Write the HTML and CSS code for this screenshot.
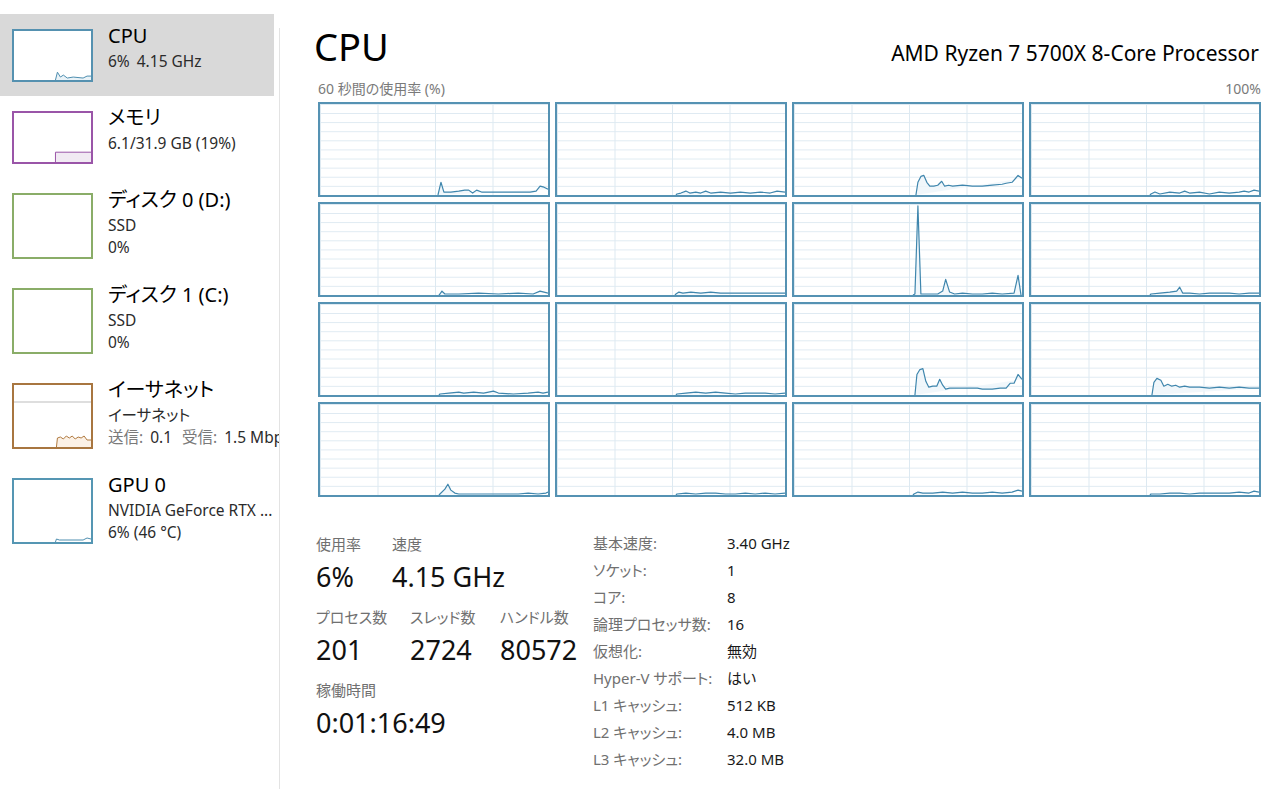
FILE: index.html
```html
<!DOCTYPE html>
<html lang="ja">
<head>
<meta charset="utf-8">
<title>タスク マネージャー - パフォーマンス</title>
<link rel="stylesheet" href="styles.css">
</head>
<body>
<div class="app">
  <nav class="sidebar">
    <div class="item selected">
      <div class="thumb thumb-cpu">
        <svg viewBox="0 0 78 50" preserveAspectRatio="none"><polygon class="fill-cpu" points="42,50 44,42 47,47 50,45 54,48 60,47 70,48 74,46 78,46 78,50"/><polyline class="line-cpu" points="42,50 44,42 47,47 50,45 54,48 60,47 70,48 74,46 78,46"/></svg>
      </div>
      <div class="info">
        <div class="name">CPU</div>
        <div class="sub">6%<span class="gap">4.15 GHz</span></div>
      </div>
    </div>
    <div class="item">
      <div class="thumb thumb-mem">
        <svg viewBox="0 0 78 50" preserveAspectRatio="none"><rect class="fill-mem" x="42" y="40" width="36" height="10"/><polyline class="line-mem" points="42,50 42,40 78,40"/></svg>
      </div>
      <div class="info">
        <div class="name">メモリ</div>
        <div class="sub">6.1/31.9 GB (19%)</div>
      </div>
    </div>
    <div class="item tall">
      <div class="thumb thumb-disk"></div>
      <div class="info">
        <div class="name">ディスク 0 (D:)</div>
        <div class="sub">SSD</div>
        <div class="sub">0%</div>
      </div>
    </div>
    <div class="item tall">
      <div class="thumb thumb-disk"></div>
      <div class="info">
        <div class="name">ディスク 1 (C:)</div>
        <div class="sub">SSD</div>
        <div class="sub">0%</div>
      </div>
    </div>
    <div class="item tall">
      <div class="thumb thumb-eth">
        <svg viewBox="0 0 78 62" preserveAspectRatio="none"><line class="eth-scale" x1="0" y1="17" x2="78" y2="17"/><polygon class="fill-eth" points="43,62 44,53 47,52 50,54 53,51 56,53 59,51 62,54 65,52 68,53 71,51 74,55 78,55 78,62"/><polyline class="line-eth" points="43,62 44,53 47,52 50,54 53,51 56,53 59,51 62,54 65,52 68,53 71,51 74,55 78,55"/></svg>
      </div>
      <div class="info">
        <div class="name">イーサネット</div>
        <div class="sub">イーサネット</div>
        <div class="sub"><span class="muted">送信:</span><span class="num">0.1</span><span class="muted">受信:</span><span class="num">1.5 Mbps</span></div>
      </div>
    </div>
    <div class="item tall">
      <div class="thumb thumb-gpu">
        <svg viewBox="0 0 78 62" preserveAspectRatio="none"><polyline class="line-cpu" points="42,62 43,59 46,60 70,60 74,58 78,59"/></svg>
      </div>
      <div class="info">
        <div class="name">GPU 0</div>
        <div class="sub">NVIDIA GeForce RTX ...</div>
        <div class="sub">6% (46 °C)</div>
      </div>
    </div>
  </nav>
  <div class="divider"></div>
  <main class="main">
    <header class="head">
      <h1 class="title">CPU</h1>
      <div class="model">AMD Ryzen 7 5700X 8-Core Processor</div>
    </header>
    <div class="axis"><span>60 秒間の使用率 (%)</span><span>100%</span></div>
    <div class="cores">
      <div class="core"><svg viewBox="0 0 230 93" preserveAspectRatio="none"><polyline points="119,93 122,80 125,90 132,90 140,89 146,88 150,88 154,91 158,88 163,90 175,90 200,90 212,90 218,89 222,84 226,85 230,87"/></svg></div>
      <div class="core"><svg viewBox="0 0 230 93" preserveAspectRatio="none"><polyline points="120,93 121,92 125,91 130,89 134,91 140,90 145,91 150,89 155,91 165,90 175,91 185,90 195,91 205,90 215,91 222,89 230,90"/></svg></div>
      <div class="core"><svg viewBox="0 0 230 93" preserveAspectRatio="none"><polyline points="123,93 125,80 128,74 131,73 134,80 137,84 141,84 145,83 149,79 152,84 156,83 160,84 170,83 180,84 190,84 200,83 210,82 214,81 220,80 226,73 230,76"/></svg></div>
      <div class="core"><svg viewBox="0 0 230 93" preserveAspectRatio="none"><polyline points="120,93 121,92 125,90 130,92 140,90 150,91 155,89 160,91 170,90 180,92 190,90 200,91 210,90 215,89 220,90 225,88 230,89"/></svg></div>

      <div class="core"><svg viewBox="0 0 230 93" preserveAspectRatio="none"><polyline points="120,93 121,92 123,89 126,92 140,92 160,91 180,92 200,91 215,92 222,89 226,90 230,91"/></svg></div>
      <div class="core"><svg viewBox="0 0 230 93" preserveAspectRatio="none"><polyline points="119,93 120,92 123,90 127,91 135,90 145,91 155,90 165,91 180,91 200,91 215,91 230,91"/></svg></div>
      <div class="core"><svg viewBox="0 0 230 93" preserveAspectRatio="none"><polyline points="120,93 122,92 125,2 128,92 132,92 145,92 150,89 153,77 157,90 162,92 170,91 180,92 190,92 200,91 210,92 222,91 226,73 229,93"/></svg></div>
      <div class="core"><svg viewBox="0 0 230 93" preserveAspectRatio="none"><polyline points="120,93 121,92 130,91 140,90 147,89 150,85 153,91 160,91 170,92 180,91 190,91 200,91 210,92 220,91 230,91"/></svg></div>

      <div class="core"><svg viewBox="0 0 230 93" preserveAspectRatio="none"><polyline points="120,93 121,92 130,91 140,90 145,91 155,90 165,91 175,89 180,91 195,92 210,91 220,90 225,91 230,90"/></svg></div>
      <div class="core"><svg viewBox="0 0 230 93" preserveAspectRatio="none"><polyline points="120,93 121,92 130,91 140,90 150,91 160,90 170,91 180,92 190,91 200,91 210,91 220,92 230,91"/></svg></div>
      <div class="core"><svg viewBox="0 0 230 93" preserveAspectRatio="none"><polyline points="122,93 124,72 127,67 130,66 133,79 136,85 140,84 144,84 147,77 150,83 153,87 157,86 165,86 175,86 185,86 190,87 200,87 208,86 214,86 218,81 222,81 226,72 230,77"/></svg></div>
      <div class="core"><svg viewBox="0 0 230 93" preserveAspectRatio="none"><polyline points="122,93 124,80 127,76 131,78 134,84 138,82 142,84 146,83 150,85 155,84 160,85 170,85 180,86 190,85 200,86 210,85 220,86 225,86 230,86"/></svg></div>

      <div class="core"><svg viewBox="0 0 230 93" preserveAspectRatio="none"><polyline points="120,93 121,92 126,87 129,82 132,88 136,91 140,92 150,92 160,92 175,92 190,92 200,92 210,91 220,92 228,91 230,90"/></svg></div>
      <div class="core"><svg viewBox="0 0 230 93" preserveAspectRatio="none"><polyline points="120,93 121,92 130,91 140,92 150,91 160,91 170,92 180,92 190,91 200,92 210,91 220,92 230,91"/></svg></div>
      <div class="core"><svg viewBox="0 0 230 93" preserveAspectRatio="none"><polyline points="120,93 121,92 125,90 130,91 140,91 150,90 160,91 170,90 180,91 190,91 200,90 210,91 220,90 226,88 230,89"/></svg></div>
      <div class="core"><svg viewBox="0 0 230 93" preserveAspectRatio="none"><polyline points="120,93 121,92 130,92 140,91 150,91 160,92 170,91 180,91 190,91 200,91 210,90 220,91 225,89 230,90"/></svg></div>
    </div>

    <section class="stats">
      <div class="live">
        <div class="stat-row row-a">
          <div class="stat"><div class="label">使用率</div><div class="value">6%</div></div>
          <div class="stat"><div class="label">速度</div><div class="value">4.15 GHz</div></div>
        </div>
        <div class="stat-row row-b">
          <div class="stat"><div class="label">プロセス数</div><div class="value">201</div></div>
          <div class="stat"><div class="label">スレッド数</div><div class="value">2724</div></div>
          <div class="stat"><div class="label">ハンドル数</div><div class="value">80572</div></div>
        </div>
        <div class="stat-row">
          <div class="stat"><div class="label">稼働時間</div><div class="value">0:01:16:49</div></div>
        </div>
      </div>
      <dl class="specs">
        <dt>基本速度:</dt><dd>3.40 GHz</dd>
        <dt>ソケット:</dt><dd>1</dd>
        <dt>コア:</dt><dd>8</dd>
        <dt>論理プロセッサ数:</dt><dd>16</dd>
        <dt>仮想化:</dt><dd>無効</dd>
        <dt>Hyper-V サポート:</dt><dd>はい</dd>
        <dt>L1 キャッシュ:</dt><dd>512 KB</dd>
        <dt>L2 キャッシュ:</dt><dd>4.0 MB</dd>
        <dt>L3 キャッシュ:</dt><dd>32.0 MB</dd>
      </dl>
    </section>
  </main>
</div>
</body>
</html>
```
FILE: styles.css
```css
html, body {
  margin: 0;
  padding: 0;
  background: #ffffff;
}

body {
  font-family: "Noto Sans", "Noto Sans CJK JP", sans-serif;
  font-feature-settings: "palt";
  color: #000000;
  width: 1280px;
  height: 789px;
  overflow: hidden;
}

.app {
  display: flex;
  height: 789px;
}

/* ---------- Sidebar ---------- */
.sidebar {
  width: 279px;
  flex: 0 0 279px;
  padding-top: 14px;
  overflow: hidden;
  box-sizing: border-box;
}

.item {
  width: 274px;
  box-sizing: border-box;
  display: flex;
  align-items: flex-start;
  padding: 15px 0 14px 12px;
  white-space: nowrap;
}

.item.selected {
  background: #d9d9d9;
}

.thumb {
  width: 81px;
  height: 53px;
  box-sizing: border-box;
  border: 2px solid #5591b0;
  background: #ffffff;
  flex: 0 0 81px;
}

.item.tall .thumb {
  height: 66px;
}

.thumb svg {
  display: block;
  width: 100%;
  height: 100%;
}

.thumb-mem { border-color: #9a55a8; }
.thumb-disk { border-color: #8aad68; }
.thumb-eth { border-color: #a87640; }
.thumb-gpu { border-color: #5596b3; }

.line-cpu {
  fill: none;
  stroke: #4f8fb0;
  stroke-width: 1;
  vector-effect: non-scaling-stroke;
}
.fill-cpu { fill: #eaf3f8; stroke: none; }

.fill-mem { fill: #f1eaf3; }
.line-mem {
  fill: none;
  stroke: #9a55a8;
  stroke-width: 1;
  vector-effect: non-scaling-stroke;
}

.eth-scale {
  stroke: #bdbdbd;
  stroke-width: 1;
  vector-effect: non-scaling-stroke;
}
.fill-eth { fill: #fbf1e6; }
.line-eth {
  fill: none;
  stroke: #b07a40;
  stroke-width: 1;
  vector-effect: non-scaling-stroke;
}

.info {
  margin-left: 15px;
  margin-top: -7px;
}

.name {
  font-size: 20px;
  line-height: 28px;
  color: #000000;
}

.sub {
  font-size: 15.5px;
  line-height: 22px;
  color: #2b2b2b;
}

.sub .gap {
  margin-left: 7px;
}

.sub .muted {
  color: #7a7a7a;
}

.sub .num {
  margin-left: 7px;
  margin-right: 10px;
}

.divider {
  width: 1px;
  flex: 0 0 1px;
  margin-top: 28px;
  background: #e3e3e3;
}

/* ---------- Main ---------- */
.main {
  flex: 1 1 auto;
  padding: 22px 19px 0 38px;
  box-sizing: border-box;
  min-width: 0;
}

.head {
  display: flex;
  justify-content: space-between;
  align-items: baseline;
  height: 48px;
}

.title {
  margin: 0 0 0 -4px;
  font-size: 38px;
  line-height: 48px;
  font-weight: 400;
}

.model {
  font-size: 21px;
  margin-right: 2px;
}

.axis {
  display: flex;
  justify-content: space-between;
  margin-top: 10px;
  height: 18px;
  font-size: 14px;
  line-height: 18px;
  color: #7a7a7a;
}

.cores {
  margin-top: 4px;
  display: grid;
  grid-template-columns: repeat(4, 1fr);
  grid-auto-rows: 95px;
  gap: 5px;
}

.core {
  box-sizing: border-box;
  border: 2px solid #5592b3;
  background-color: #ffffff;
  background-image:
    linear-gradient(to right, #dde9f1 1px, transparent 1px),
    linear-gradient(to bottom, #dde9f1 1px, transparent 1px);
  background-size: 57.5px 100%, 100% 9.1px;
  background-position: 0 0, 0 0;
}

.core svg {
  display: block;
  width: 100%;
  height: 100%;
}

.core polyline {
  fill: #eef5fa;
  fill-opacity: 0.8;
  stroke: #3f86ad;
  stroke-width: 1.2;
  stroke-linejoin: round;
  vector-effect: non-scaling-stroke;
}

/* ---------- Stats ---------- */
.stats {
  display: flex;
  margin-top: 37px;
}

.live {
  width: 277px;
  flex: 0 0 277px;
  margin-left: -2px;
}

.stat-row {
  display: grid;
  grid-template-columns: auto;
  margin-bottom: 10px;
}

.row-a {
  grid-template-columns: 76px auto;
}

.row-b {
  grid-template-columns: 94px 90px auto;
}

.label {
  font-size: 15px;
  line-height: 20px;
  color: #707070;
}

.value {
  margin-top: 3px;
  font-size: 27px;
  line-height: 40px;
  color: #111111;
  white-space: nowrap;
}

.specs {
  margin: -4px 0 0 0;
  display: grid;
  grid-template-columns: 134px auto;
  grid-auto-rows: 27px;
  font-size: 15px;
  line-height: 27px;
}

.specs dt {
  color: #707070;
  white-space: nowrap;
}

.specs dd {
  margin: 0;
  color: #1a1a1a;
}
```
